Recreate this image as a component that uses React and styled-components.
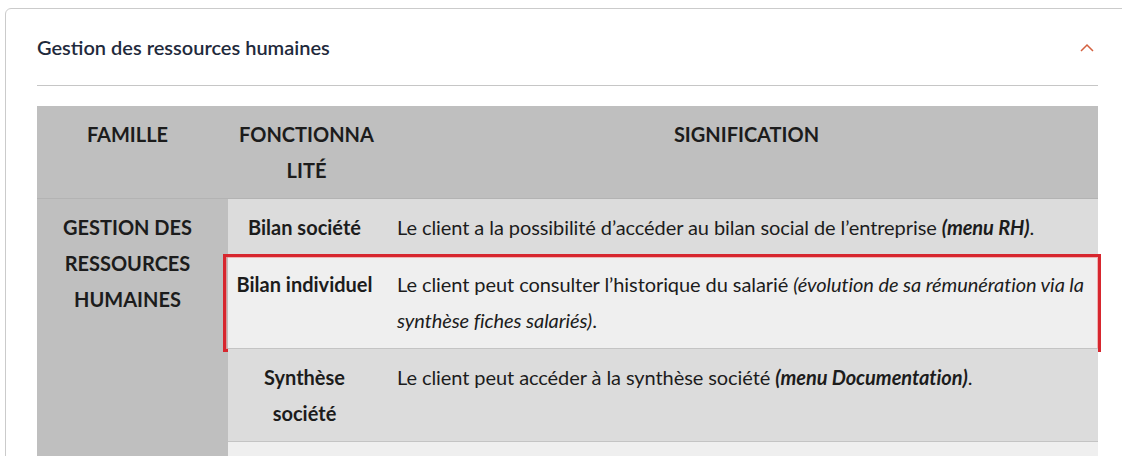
import React from "react";
import styled, { createGlobalStyle } from "styled-components";

const Global = createGlobalStyle`
  html, body { margin: 0; padding: 0; overflow: hidden; background: #fff; }
  body { font-family: Lato, "Open Sans", sans-serif; color: #1c1c1c; }
`;

const Page = styled.div`
  padding: 8px 0 0 5px;
`;

const Card = styled.section`
  width: 1125px;
  border: 1px solid #cbcbcb;
  border-radius: 6px;
  padding: 0 31px 40px 31px;
  box-sizing: border-box;
`;

const CardHead = styled.div`
  height: 76px;
  display: flex;
  align-items: center;
  justify-content: space-between;
  border-bottom: 1px solid #c6c6c6;
`;

const Title = styled.h2`
  margin: 0;
  font-size: 20px;
  font-weight: 600;
  color: #1f2a3c;
`;

const Toggle = styled.button`
  border: 0;
  background: none;
  padding: 0;
  margin-right: 4px;
  display: flex;
  cursor: pointer;
`;

const Table = styled.div`
  margin-top: 20px;
  font-size: 20px;
  line-height: 36px;
`;

const HeadRow = styled.div`
  display: flex;
  background: #bfbfbf;
  border-bottom: 1px solid #b3b3b3;
`;

const HeadCell = styled.div`
  box-sizing: border-box;
  width: ${(p) => p.$w || "auto"};
  flex: ${(p) => (p.$w ? "none" : "1")};
  padding: 10px ${(p) => p.$pr || "10px"} 10px ${(p) => p.$pl || "10px"};
  font-weight: 700;
  text-transform: uppercase;
  text-align: center;
  word-break: break-all;
`;

const Body = styled.div`
  display: flex;
`;

const FamilyCell = styled.div`
  box-sizing: border-box;
  width: 191px;
  flex: none;
  background: #bfbfbf;
  padding: 10px 20px 10px 10px;
  font-weight: 700;
  text-transform: uppercase;
  text-align: center;
`;

const Rows = styled.div`
  flex: 1;
  display: flex;
  flex-direction: column;
`;

const Row = styled.div`
  position: relative;
  display: flex;
  min-height: 56px;
  background: ${(p) => (p.$alt ? "#efefef" : "#dcdcdc")};
  border-top: ${(p) => (p.$first ? "0" : "1px solid #c4c4c4")};
  ${(p) =>
    p.$highlight &&
    `
    &::after {
      content: "";
      position: absolute;
      left: -5px;
      right: -3px;
      top: -2px;
      bottom: -4px;
      border: 3px solid #d7262e;
      box-shadow: inset 0 0 0 1px rgba(240,120,120,0.5);
      pointer-events: none;
    }
  `}
`;

const FeatureCell = styled.div`
  box-sizing: border-box;
  width: 157px;
  flex: none;
  padding: 10px 12px 10px 8px;
  font-weight: 700;
  text-align: center;
`;

const DescCell = styled.div`
  flex: 1;
  padding: 10px 2px 10px 12px;
  letter-spacing: -0.08px;
`;

const Chevron = () => (
  <svg width="14" height="9" viewBox="0 0 14 9" fill="none">
    <polyline points="1,8 7,2 13,8" stroke="#d4603f" strokeWidth="1.5" />
  </svg>
);

const rows = [
  {
    f: "Bilan société",
    d: (
      <>
        Le client a la possibilité d’accéder au bilan social de l’entreprise{" "}
        <em><strong>(menu RH)</strong></em>.
      </>
    ),
  },
  {
    f: "Bilan individuel",
    hl: true,
    d: (
      <>
        Le client peut consulter l’historique du salarié{" "}
        <em>(évolution de sa rémunération via la synthèse fiches salariés)</em>.
      </>
    ),
  },
  {
    f: "Synthèse société",
    d: (
      <>
        Le client peut accéder à la synthèse société{" "}
        <em><strong>(menu Documentation)</strong></em>.
      </>
    ),
  },
  { f: "", d: null },
];

export default function App() {
  return (
    <Page>
      <Global />
      <Card>
        <CardHead>
          <Title>Gestion des ressources humaines</Title>
          <Toggle aria-label="Replier">
            <Chevron />
          </Toggle>
        </CardHead>
        <Table>
          <HeadRow>
            <HeadCell $w="191px" $pr="20px">Famille</HeadCell>
            <HeadCell $w="157px">Fonctionnalité</HeadCell>
            <HeadCell $pl="12px" $pr="2px">Signification</HeadCell>
          </HeadRow>
          <Body>
            <FamilyCell>Gestion des ressources humaines</FamilyCell>
            <Rows>
              {rows.map((r, i) => (
                <Row key={i} $alt={i % 2 === 1} $first={i === 0} $highlight={r.hl}>
                  <FeatureCell>{r.f}</FeatureCell>
                  <DescCell>{r.d}</DescCell>
                </Row>
              ))}
            </Rows>
          </Body>
        </Table>
      </Card>
    </Page>
  );
}
